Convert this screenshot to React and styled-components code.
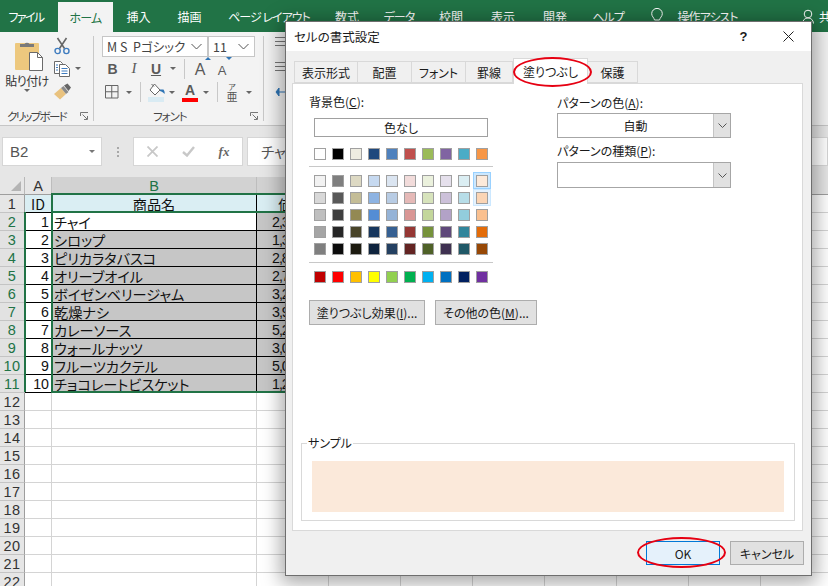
import { Fragment } from 'react'
import styled, { createGlobalStyle } from 'styled-components'

const GREEN = '#217346'
const UI_FONT = '"Noto Sans CJK JP", "Liberation Sans", sans-serif'

const GlobalStyle = createGlobalStyle`
  html, body {
    margin: 0;
    padding: 0;
    background: #fff;
  }
  * {
    box-sizing: border-box;
  }
`

const Page = styled.div`
  position: relative;
  width: 828px;
  height: 586px;
  overflow: hidden;
  display: flex;
  flex-direction: column;
  font-family: ${UI_FONT};
  font-feature-settings: 'palt';
  color: #222;
`

/* ---------- ribbon tabs ---------- */

const TabStrip = styled.div`
  display: flex;
  align-items: flex-end;
  flex: 0 0 32px;
  height: 32px;
  background: ${GREEN};
  white-space: nowrap;
`

const RibbonTab = styled.div`
  display: flex;
  align-items: center;
  justify-content: center;
  flex: 0 0 ${(p) => p.$w}px;
  height: ${(p) => (p.$active ? 30 : 32)}px;
  background: ${(p) => (p.$active ? '#f3f3f3' : 'transparent')};
  color: ${(p) => (p.$active ? GREEN : '#fff')};
  font-size: 12px;
  letter-spacing: ${(p) => p.$track || 0}px;
`

const TabSpacer = styled.div`
  flex: 0 0 ${(p) => p.$w}px;
`

const TabIcon = styled.div`
  display: flex;
  align-items: center;
  justify-content: center;
  flex: 0 0 ${(p) => p.$w}px;
  height: 32px;
`

/* ---------- ribbon ---------- */

const Ribbon = styled.div`
  display: flex;
  flex: 0 0 94px;
  height: 94px;
  background: #f3f3f3;
  border-bottom: 1px solid #c6c6c6;
  overflow: hidden;
`

const Group = styled.div`
  display: flex;
  flex-direction: column;
  flex: 0 0 ${(p) => p.$w}px;
  margin: 4px 0 4px;
  border-right: 1px solid #c8c8c8;
`

const GroupBody = styled.div`
  flex: 0 0 68px;
  display: flex;
`

const GroupFoot = styled.div`
  flex: 1;
  display: flex;
  align-items: center;
  justify-content: space-between;
  font-size: 11.5px;
  color: #444;
  padding: ${(p) => p.$pad};
`

const FootLabel = styled.span`
  letter-spacing: ${(p) => p.$track}px;
`

const PasteCol = styled.div`
  flex: 0 0 54px;
  display: flex;
  flex-direction: column;
  align-items: center;
  padding-top: 4px;
  font-size: 12px;
  color: #333;
`

const PasteLabel = styled.div`
  margin-top: 1px;
  line-height: 16px;
  letter-spacing: -0.6px;
`

const SmallCol = styled.div`
  display: flex;
  flex-direction: column;
  flex: 1;
  margin-top: -2px;
`

const SmallRow = styled.div`
  display: flex;
  align-items: center;
  height: 23px;
`

const FontCol = styled.div`
  display: flex;
  flex-direction: column;
  padding-left: 8px;
`

const ComboRow = styled.div`
  display: flex;
  flex: 0 0 21px;
`

const Combo = styled.div`
  display: flex;
  align-items: center;
  justify-content: space-between;
  width: ${(p) => p.$w}px;
  height: 21px;
  padding: 0 5px 0 4px;
  background: #fff;
  border: 1px solid #c6c6c6;
  font-size: 12.5px;
  color: #444;
  white-space: pre;
`

const ToolRow = styled.div`
  display: flex;
  align-items: center;
  height: ${(p) => p.$h}px;
`

const Slot = styled.div`
  display: flex;
  align-items: center;
  justify-content: center;
  flex: 0 0 ${(p) => p.$w}px;
  height: 22px;
`

const Divider = styled.div`
  flex: 0 0 1px;
  width: 1px;
  height: 20px;
  background: #c8c8c8;
`

const Caret = styled.span`
  display: block;
  width: 0;
  height: 0;
  border-left: 3.5px solid transparent;
  border-right: 3.5px solid transparent;
  border-top: 3.5px solid ${(p) => p.$color || '#666'};
`

const StyleLetter = styled.span`
  font-family: ${(p) => (p.$serif ? '"Liberation Serif", serif' : '"Liberation Sans", sans-serif')};
  font-size: ${(p) => p.$size || 14}px;
  font-weight: ${(p) => (p.$bold ? 700 : 400)};
  font-style: ${(p) => (p.$italic ? 'italic' : 'normal')};
  text-decoration: ${(p) => (p.$under ? 'underline' : 'none')};
  color: #5a5a5a;
  line-height: 1;
`

const GrowLetter = styled.span`
  position: relative;
  display: block;
  line-height: 1;
`

const GrowMark = styled.span`
  position: absolute;
  top: -3px;
  right: -6px;
  width: 0;
  height: 0;
  border-left: 3px solid transparent;
  border-right: 3px solid transparent;
  ${(p) => (p.$down ? 'border-top' : 'border-bottom')}: 3px solid #2f75b5;
`

const ColorLetter = styled.div`
  display: flex;
  flex-direction: column;
  align-items: center;
  width: 16px;
`

const ColorBar = styled.div`
  width: 16px;
  height: 4px;
  margin-top: 1px;
  background: #f00;
`

const Phonetic = styled.div`
  display: flex;
  flex-direction: column;
  align-items: center;
  color: #555;
`

const PhoneticTop = styled.span`
  font-size: 8px;
  line-height: 8px;
`

const PhoneticBase = styled.span`
  font-size: 11px;
  line-height: 11px;
`

const EdgeCol = styled.div`
  display: flex;
  flex-direction: column;
  gap: 15px;
  padding: 5px 0 0 11px;
`

/* ---------- formula bar ---------- */

const FormulaBar = styled.div`
  display: flex;
  flex: 0 0 51px;
  height: 51px;
  padding: 11px 0 11px 2px;
  background: #e6e6e6;
`

const NameBox = styled.div`
  display: flex;
  align-items: center;
  justify-content: space-between;
  flex: 0 0 100px;
  padding: 0 6px 0 7px;
  background: #fff;
  border: 1px solid #d6d6d6;
  font-family: 'Liberation Sans', sans-serif;
  font-size: 15px;
  color: #555;
`

const Grip = styled.div`
  display: flex;
  flex-direction: column;
  align-items: center;
  justify-content: center;
  gap: 2px;
  flex: 0 0 31px;
`

const GripDot = styled.span`
  width: 2px;
  height: 2px;
  background: #a8a8a8;
`

const FxBox = styled.div`
  display: flex;
  align-items: center;
  flex: 0 0 110px;
  background: #fff;
  border: 1px solid #d6d6d6;
`

const FxSlot = styled.div`
  display: flex;
  align-items: center;
  justify-content: center;
  flex: 1;
  font-family: 'Liberation Serif', serif;
  font-style: italic;
  font-weight: 700;
  font-size: 13px;
  color: #666;
`

const FormulaInput = styled.div`
  display: flex;
  align-items: center;
  flex: 1;
  margin-left: 4px;
  padding-left: 13px;
  background: #fff;
  border: 1px solid #d6d6d6;
  font-size: 14.5px;
  color: #555;
`

/* ---------- sheet ---------- */

const Sheet = styled.div`
  position: relative;
  flex: 1;
  display: grid;
  grid-template-columns: 25px 27px 205px repeat(8, 72px);
  grid-auto-rows: 18px;
  align-content: start;
  background: #fff;
  font-size: 14.2px;
  line-height: 16px;
  color: #111;
  overflow: hidden;
`

const Corner = styled.div`
  display: flex;
  align-items: flex-end;
  justify-content: flex-end;
  padding: 0 3px 3px 0;
  background: #e6e6e6;
  border-right: 1px solid #b8b8b8;
  border-bottom: 1px solid #9e9e9e;
`

const CornerMark = styled.span`
  width: 0;
  height: 0;
  border-left: 10px solid transparent;
  border-bottom: 10px solid #b4b4b4;
`

const ColHead = styled.div`
  display: flex;
  align-items: center;
  justify-content: center;
  background: ${(p) => (p.$sel ? '#d2d2d2' : '#e6e6e6')};
  color: ${(p) => (p.$green ? GREEN : '#333')};
  border-right: 1px solid #bdbdbd;
  border-bottom: 1px solid #9e9e9e;
  font-family: 'Liberation Sans', sans-serif;
  font-size: 14.5px;
`

const RowHead = styled.div`
  display: flex;
  align-items: center;
  justify-content: center;
  background: ${(p) => (p.$sel ? '#e2e2e2' : '#e6e6e6')};
  color: ${(p) => (p.$sel ? GREEN : '#333')};
  border-right: 1px solid #9e9e9e;
  border-bottom: 1px solid #c4c4c4;
  font-family: 'Liberation Sans', sans-serif;
  font-size: 14.5px;
  letter-spacing: 0.5px;
`

const Cell = styled.div`
  display: flex;
  align-items: center;
  justify-content: ${(p) => p.$justify || 'flex-start'};
  padding: ${(p) => p.$pad || '0 2px'};
  background: ${(p) => p.$fill || '#fff'};
  border-right: 1px solid ${(p) => (p.$table ? '#000' : '#d4d4d4')};
  border-bottom: 1px solid ${(p) => (p.$table ? '#000' : '#d4d4d4')};
  white-space: nowrap;
  overflow: hidden;
`

const NumText = styled.span`
  font-family: 'Liberation Sans', sans-serif;
  letter-spacing: ${(p) => p.$track || 0}px;
`

const SelectionLine = styled.div`
  position: absolute;
  left: ${(p) => p.$x}px;
  top: ${(p) => p.$y}px;
  width: ${(p) => p.$w}px;
  height: ${(p) => p.$h}px;
  background: ${GREEN};
`

/* ---------- dialog ---------- */

const Dialog = styled.div`
  position: absolute;
  z-index: 1;
  left: 285px;
  top: 21px;
  width: 527px;
  height: 555px;
  display: flex;
  flex-direction: column;
  background: #f0f0f0;
  border: 1px solid #6e6e6e;
  box-shadow: 0 3px 18px 4px rgba(0, 0, 0, 0.35);
  font-size: 12px;
  color: #1a1a1a;
`

const TitleBar = styled.div`
  display: flex;
  align-items: center;
  flex: 0 0 29px;
  padding-left: 8px;
  background: #fff;
`

const TitleText = styled.div`
  flex: 1;
  font-size: 12.5px;
`

const TitleButton = styled.div`
  display: flex;
  align-items: center;
  justify-content: center;
  flex: 0 0 45px;
  font-family: 'Liberation Sans', sans-serif;
  font-size: 13px;
  font-weight: 700;
`

const DialogTabs = styled.div`
  display: flex;
  align-items: flex-end;
  flex: 0 0 32px;
  padding-left: 8px;
`

const DialogTab = styled.div`
  position: relative;
  z-index: ${(p) => (p.$active ? 1 : 0)};
  display: flex;
  align-items: center;
  justify-content: center;
  flex: 0 0 ${(p) => p.$w}px;
  height: ${(p) => (p.$active ? 26 : 22)}px;
  margin-bottom: ${(p) => (p.$active ? -1 : 0)}px;
  background: ${(p) => (p.$active ? '#fff' : '#f0f0f0')};
  border: 1px solid #d9d9d9;
  border-bottom: ${(p) => (p.$active ? 'none' : '1px solid #d9d9d9')};
  border-left-width: ${(p) => (p.$first || p.$active ? 1 : 0)}px;
`

const Panel = styled.div`
  display: flex;
  flex-direction: column;
  flex: 0 0 448px;
  margin: 0 8px 0 6px;
  background: #fff;
  border: 1px solid #d9d9d9;
`

const PanelColumns = styled.div`
  display: flex;
  padding: 10px 0 0 16px;
`

const LeftCol = styled.div`
  flex: 0 0 184px;
  min-width: 0;
`

const RightCol = styled.div`
  flex: 0 0 174px;
  margin-left: 64px;
  padding-top: 1px;
`

const FieldLabel = styled.div`
  height: 16px;
  line-height: 16px;
  margin-top: ${(p) => p.$mt || 0}px;
`

const NoColor = styled.div`
  display: flex;
  align-items: center;
  justify-content: center;
  width: 174px;
  height: 19px;
  margin: 8px 0 0 5px;
  background: #fff;
  border: 1px solid #a0a0a0;
`

const Palette = styled.div`
  display: grid;
  grid-template-columns: repeat(10, 18px);
  grid-auto-rows: 17px;
  margin: ${(p) => p.$mt}px 0 0 2px;
`

const SwatchCell = styled.div`
  display: flex;
  align-items: center;
  justify-content: center;
  background: ${(p) => (p.$state === 'selected' ? '#cce8ff' : p.$state === 'hover' ? '#e5f3ff' : 'transparent')};
  border: 1px solid
    ${(p) => (p.$state === 'selected' ? '#99d1ff' : p.$state === 'hover' ? '#cce8ff' : 'transparent')};
`

const Swatch = styled.span`
  display: block;
  flex: 0 0 12px;
  width: 12px;
  height: 12px;
  background: ${(p) => p.$color};
  border: 1px solid #a0a0a0;
`

const Rule = styled.div`
  height: 1px;
  margin-top: ${(p) => p.$mt}px;
  background: #c8c8c8;
`

const ButtonRow = styled.div`
  display: flex;
  gap: 10px;
  margin-top: 15px;
`

const DialogButton = styled.div`
  display: flex;
  align-items: center;
  justify-content: center;
  flex: 0 0 ${(p) => p.$w}px;
  height: ${(p) => p.$h || 25}px;
  background: ${(p) => (p.$primary ? '#e5f1fb' : '#e1e1e1')};
  border: 1px solid ${(p) => (p.$primary ? '#0078d7' : '#adadad')};
  white-space: nowrap;
`

const SelectBox = styled.div`
  display: flex;
  align-items: stretch;
  height: ${(p) => p.$h}px;
  margin-top: ${(p) => p.$mt}px;
  background: #fff;
  border: 1px solid #a6a6a6;
`

const SelectValue = styled.div`
  display: flex;
  align-items: center;
  justify-content: center;
  flex: 1;
`

const SelectArrow = styled.div`
  display: flex;
  align-items: center;
  justify-content: center;
  flex: 0 0 17px;
  background: #e1e1e1;
  border-left: 1px solid #c4c4c4;
`

const SampleBox = styled.div`
  position: relative;
  margin: auto 7px 9px 8px;
  padding: 17px 10px 8px;
  border: 1px solid #d9d9d9;
`

const SampleLegend = styled.div`
  position: absolute;
  left: 5px;
  top: -8px;
  padding: 0 1px;
  line-height: 14px;
  background: #fff;
`

const SampleFill = styled.div`
  height: 51px;
  background: #fbe9da;
`

const DialogFooter = styled.div`
  display: flex;
  justify-content: flex-end;
  gap: 10px;
  padding: 10px 7px 0 0;
`

const RedOval = styled.div`
  position: absolute;
  z-index: 2;
  left: ${(p) => p.$x}px;
  top: ${(p) => p.$y}px;
  width: ${(p) => p.$w}px;
  height: ${(p) => p.$h}px;
  border: 2px solid #e60012;
  border-radius: 50%;
  pointer-events: none;
`

/* ---------- icons ---------- */

const PasteIcon = () => (
  <svg width="34" height="32" viewBox="-4 0 34 32">
    <rect x="1" y="3" width="24" height="27" rx="1" fill="#edc87e" />
    <path d="M6 7V4h4.500a3 3 0 0 1 5 0H20v3z" fill="#7a7a7a" />
    <path d="M15.500 12.500h8l5 5v13h-13z" fill="#fff" stroke="#6a6a6a" />
    <path d="M23.500 12.500v5h5" fill="none" stroke="#6a6a6a" />
  </svg>
)

const ScissorsIcon = () => (
  <svg width="16" height="18" viewBox="0 0 16 18">
    <path d="M5.500 11.500 12.500 1M10.500 11.500 3.500 1" stroke="#666" strokeWidth="1.6" fill="none" />
    <circle cx="3.600" cy="14" r="2.600" fill="none" stroke="#3f7cbf" strokeWidth="1.4" />
    <circle cx="12.400" cy="14" r="2.600" fill="none" stroke="#3f7cbf" strokeWidth="1.4" />
  </svg>
)

const CopyIcon = () => (
  <svg width="16" height="16" viewBox="0 0 16 16">
    <path d="M.5.500h6l2 2v10h-8z" fill="#fff" stroke="#6a6a6a" />
    <path d="M5.500 3.500h6l4 4v8h-10z" fill="#fff" stroke="#6a6a6a" />
    <path d="M2 4h2M2 6.500h2M2 9h2M7.500 7.500h6M7.500 10h6M7.500 12.500h6" stroke="#3f7cbf" />
  </svg>
)

const BrushIcon = () => (
  <svg width="18" height="17" viewBox="0 0 18 17">
    <path d="M0 11 7 5l5 6-6 5.500z" fill="#e9c27e" />
    <path d="M7 5l2.500-2 5 6L12 11z" fill="#8a8a8a" />
    <path d="M10 2.500 13.500.5l3.500 4-2.500 3.500z" fill="#666" />
  </svg>
)

const GridIcon = () => (
  <svg width="14" height="14" viewBox="0 0 14 14">
    <path d="M.5.500h12.500v12.500H.5zM6.750.5v12.500M.5 6.750h12.500" fill="none" stroke="#666" />
  </svg>
)

const BucketIcon = () => (
  <svg width="18" height="19" viewBox="0 0 18 19">
    <rect x="0" y="14" width="16" height="5" fill="#d9ebf3" />
    <path d="M6.500 1 12 7l-5 5-5-5z" fill="#fff" stroke="#666" />
    <path d="M3.500 1 6 3.500" stroke="#666" />
    <path d="M12 6.500h3.500c1 1.500 1.500 3 1 4.500-1-1-1.500-2-4.500-3z" fill="#2f75b5" />
  </svg>
)

const Launcher = () => (
  <svg width="9" height="9" viewBox="0 0 9 9">
    <path d="M.5 4V.5H8" fill="none" stroke="#777" />
    <path d="M2.500 2.500 7 7M4 7.500h3.500V4" fill="none" stroke="#777" />
  </svg>
)

const AlignIcon = () => (
  <svg width="14" height="10" viewBox="0 0 14 10">
    <path d="M0 .5h14M0 4.500h14M0 8.500h14" stroke="#777" />
  </svg>
)

const IndentIcon = () => (
  <svg width="14" height="10" viewBox="0 0 14 10">
    <path d="M4 1 1 5l3 4zM3 5h7" fill="#2f75b5" stroke="#2f75b5" />
    <path d="M11 .5h3M11 4.500h3M11 8.500h3" stroke="#777" />
  </svg>
)

const ComboChevron = () => (
  <svg width="11" height="7" viewBox="0 0 11 7">
    <path d="M.5 1 5.500 6l5-5" fill="none" stroke="#555" />
  </svg>
)

const SelectChevron = () => (
  <svg width="9" height="5" viewBox="0 0 9 5">
    <path d="M.5.500 4.500 4.500l4-4" fill="none" stroke="#555" />
  </svg>
)

const CrossIcon = () => (
  <svg width="11" height="11" viewBox="0 0 11 11">
    <path d="M.5.500l10 10M10.500.500l-10 10" stroke="#c8c8c8" strokeWidth="1.8" />
  </svg>
)

const CheckIcon = () => (
  <svg width="13" height="11" viewBox="0 0 13 11">
    <path d="M1 6l4 3.500L12 1" fill="none" stroke="#c8c8c8" strokeWidth="2.400" />
  </svg>
)

const CloseIcon = () => (
  <svg width="11" height="11" viewBox="0 0 11 11">
    <path d="M.5.500l10 10M10.500.500l-10 10" stroke="#222" />
  </svg>
)

const BulbIcon = () => (
  <svg width="12" height="16" viewBox="0 0 12 16">
    <path d="M3.500 12C3 9.500.7 8.500.7 5.700a5.300 5.300 0 0 1 10.600 0c0 2.800-2.300 3.800-2.800 6.300zM4 14.500h4" fill="none" stroke="#fff" />
  </svg>
)

const PersonIcon = () => (
  <svg width="12" height="15" viewBox="0 0 12 15">
    <circle cx="6" cy="5" r="3.800" fill="none" stroke="#fff" />
    <path d="M.5 14.500c.3-3.500 2.300-5.500 5.500-5.500s5.200 2 5.500 5.500" fill="none" stroke="#fff" />
  </svg>
)

/* ---------- data ---------- */

const PRODUCTS = [
  ['チャイ', '2,340'],
  ['シロップ', '1,300'],
  ['ピリカラタバスコ', '2,800'],
  ['オリーブオイル', '2,700'],
  ['ボイゼンベリージャム', '3,200'],
  ['乾燥ナシ', '3,900'],
  ['カレーソース', '5,200'],
  ['ウォールナッツ', '3,000'],
  ['フルーツカクテル', '5,000'],
  ['チョコレートビスケット', '1,200'],
]

const THEME_TOP = ['#ffffff', '#000000', '#eeece1', '#1f497d', '#4f81bd', '#c0504d', '#9bbb59', '#8064a2', '#4bacc6', '#f79646']
const THEME_SHADES = [
  '#f2f2f2', '#7f7f7f', '#ddd9c3', '#c6d9f0', '#dbe5f1', '#f2dcdb', '#ebf1dd', '#e5e0ec', '#dbeef3', '#fdeada',
  '#d8d8d8', '#595959', '#c4bd97', '#8db3e2', '#b8cce4', '#e5b9b7', '#d7e3bc', '#ccc1d9', '#b7dde8', '#fbd5b5',
  '#bfbfbf', '#3f3f3f', '#938953', '#548dd4', '#95b3d7', '#d99694', '#c3d69b', '#b2a2c7', '#92cddc', '#fac08f',
  '#a5a5a5', '#262626', '#494429', '#17365d', '#366092', '#953734', '#76923c', '#5f497a', '#31859b', '#e36c09',
  '#7f7f7f', '#0c0c0c', '#1d1b10', '#0f243e', '#244061', '#632423', '#4f6128', '#3f3151', '#205867', '#974806',
]
const STANDARD = ['#c00000', '#ff0000', '#ffc000', '#ffff00', '#92d050', '#00b050', '#00b0f0', '#0070c0', '#002060', '#7030a0']

const COLUMNS = ['D', 'E', 'F', 'G', 'H', 'I', 'J']
const ALL_COLUMNS = ['A', 'B', 'C', ...COLUMNS]
const GRAY = '#c6c6c6'
const HEADER_BLUE = '#daeef3'

function swatchState(i) {
  if (i === 9) return 'selected'
  if (i === 19) return 'hover'
  return undefined
}

function PaletteRow({ colors, mt, marks }) {
  return (
    <Palette $mt={mt}>
      {colors.map((c, i) => (
        <SwatchCell key={i} $state={marks ? swatchState(i) : undefined}>
          <Swatch $color={c} />
        </SwatchCell>
      ))}
    </Palette>
  )
}

function Spreadsheet() {
  const blankRows = Array.from({ length: 11 }, (_, i) => i + 12)

  return (
    <Sheet>
      <Corner>
        <CornerMark />
      </Corner>
      <ColHead>A</ColHead>
      <ColHead $sel $green>B</ColHead>
      <ColHead $sel>C</ColHead>
      {COLUMNS.map((c) => (
        <ColHead key={c}>{c}</ColHead>
      ))}

      <RowHead>1</RowHead>
      <Cell $table $fill={HEADER_BLUE} $justify="center">ID</Cell>
      <Cell $table $fill={HEADER_BLUE} $justify="center">商品名</Cell>
      <Cell $table $fill={HEADER_BLUE} $justify="center">価格</Cell>
      {COLUMNS.map((c) => (
        <Cell key={c} />
      ))}

      {PRODUCTS.map(([name, price], i) => (
        <Fragment key={name}>
          <RowHead $sel>{i + 2}</RowHead>
          <Cell $table $justify="flex-end"><NumText>{i + 1}</NumText></Cell>
          <Cell $table $fill={i === 0 ? '#fff' : GRAY}>{name}</Cell>
          <Cell $table $fill={GRAY} $pad="0 0 0 15px"><NumText $track={-1}>{price}</NumText></Cell>
          {COLUMNS.map((c) => (
            <Cell key={c} />
          ))}
        </Fragment>
      ))}

      {blankRows.map((r) => (
        <Fragment key={r}>
          <RowHead>{r}</RowHead>
          {ALL_COLUMNS.map((c) => (
            <Cell key={c} />
          ))}
        </Fragment>
      ))}

      <SelectionLine $x={51} $y={16} $w={300} $h={2} />
      <SelectionLine $x={51} $y={34} $w={300} $h={2} />
      <SelectionLine $x={51} $y={214} $w={300} $h={2} />
      <SelectionLine $x={51} $y={16} $w={2} $h={200} />
      <SelectionLine $x={24} $y={35} $w={2} $h={180} />
    </Sheet>
  )
}

function FormatDialog() {
  return (
    <Dialog>
      <TitleBar>
        <TitleText>セルの書式設定</TitleText>
        <TitleButton>?</TitleButton>
        <TitleButton><CloseIcon /></TitleButton>
      </TitleBar>

      <DialogTabs>
        <DialogTab $w={64} $first>表示形式</DialogTab>
        <DialogTab $w={54}>配置</DialogTab>
        <DialogTab $w={54}>フォント</DialogTab>
        <DialogTab $w={47}>罫線</DialogTab>
        <DialogTab $w={75} $active>塗りつぶし</DialogTab>
        <DialogTab $w={50}>保護</DialogTab>
      </DialogTabs>

      <Panel>
        <PanelColumns>
          <LeftCol>
            <FieldLabel>背景色(<u>C</u>):</FieldLabel>
            <NoColor>色なし</NoColor>
            <PaletteRow colors={THEME_TOP} mt={8} />
            <Rule $mt={4} />
            <PaletteRow colors={THEME_SHADES} mt={5} marks />
            <Rule $mt={5} />
            <PaletteRow colors={STANDARD} mt={5} />
            <ButtonRow>
              <DialogButton $w={116}>塗りつぶし効果(<u>I</u>)...</DialogButton>
              <DialogButton $w={102}>その他の色(<u>M</u>)...</DialogButton>
            </ButtonRow>
          </LeftCol>

          <RightCol>
            <FieldLabel>パターンの色(<u>A</u>):</FieldLabel>
            <SelectBox $h={25} $mt={2}>
              <SelectValue>自動</SelectValue>
              <SelectArrow><SelectChevron /></SelectArrow>
            </SelectBox>
            <FieldLabel $mt={5}>パターンの種類(<u>P</u>):</FieldLabel>
            <SelectBox $h={26} $mt={3}>
              <SelectValue />
              <SelectArrow><SelectChevron /></SelectArrow>
            </SelectBox>
          </RightCol>
        </PanelColumns>

        <SampleBox>
          <SampleLegend>サンプル</SampleLegend>
          <SampleFill />
        </SampleBox>
      </Panel>

      <DialogFooter>
        <DialogButton $w={74} $h={24} $primary>OK</DialogButton>
        <DialogButton $w={74} $h={24}>キャンセル</DialogButton>
      </DialogFooter>
    </Dialog>
  )
}

export default function App() {
  return (
    <Page>
      <GlobalStyle />

      <TabStrip>
        <RibbonTab $w={52} $track={-1.6}>ファイル</RibbonTab>
        <TabSpacer $w={6} />
        <RibbonTab $w={55} $track={-0.8} $active>ホーム</RibbonTab>
        <RibbonTab $w={51}>挿入</RibbonTab>
        <RibbonTab $w={51}>描画</RibbonTab>
        <RibbonTab $w={108} $track={-1}>ページ レイアウト</RibbonTab>
        <RibbonTab $w={48}>数式</RibbonTab>
        <RibbonTab $w={56} $track={-1}>データ</RibbonTab>
        <RibbonTab $w={48}>校閲</RibbonTab>
        <RibbonTab $w={56}>表示</RibbonTab>
        <RibbonTab $w={48}>開発</RibbonTab>
        <RibbonTab $w={58} $track={-1}>ヘルプ</RibbonTab>
        <TabIcon $w={40}><BulbIcon /></TabIcon>
        <RibbonTab $w={61} $track={-1}>操作アシスト</RibbonTab>
        <TabSpacer $w={63} />
        <TabIcon $w={14}><PersonIcon /></TabIcon>
        <TabSpacer $w={4} />
        <RibbonTab $w={24}>共有</RibbonTab>
      </TabStrip>

      <Ribbon>
        <Group $w={94}>
          <GroupBody>
            <PasteCol>
              <PasteIcon />
              <PasteLabel>貼り付け</PasteLabel>
              <Caret />
            </PasteCol>
            <SmallCol>
              <SmallRow><Slot $w={16}><ScissorsIcon /></Slot></SmallRow>
              <SmallRow>
                <Slot $w={16}><CopyIcon /></Slot>
                <Slot $w={16}><Caret /></Slot>
              </SmallRow>
              <SmallRow><Slot $w={18}><BrushIcon /></Slot></SmallRow>
            </SmallCol>
          </GroupBody>
          <GroupFoot $pad="4px 4px 0 7px">
            <FootLabel $track={-1.7}>クリップボード</FootLabel>
            <Launcher />
          </GroupFoot>
        </Group>

        <Group $w={170}>
          <GroupBody>
            <FontCol>
              <ComboRow>
                <Combo $w={106}>{'M S  Pゴシック'}<ComboChevron /></Combo>
                <Combo $w={47}>11<ComboChevron /></Combo>
              </ComboRow>
              <ToolRow $h={23}>
                <Slot $w={21}><StyleLetter $bold>B</StyleLetter></Slot>
                <Slot $w={22}><StyleLetter $serif $italic $size={15}>I</StyleLetter></Slot>
                <Slot $w={22}><StyleLetter $bold $under>U</StyleLetter></Slot>
                <Slot $w={12}><Caret /></Slot>
                <Slot $w={5} />
                <Divider />
                <Slot $w={30}>
                  <GrowLetter>
                    <StyleLetter $size={16}>A</StyleLetter>
                    <GrowMark />
                  </GrowLetter>
                </Slot>
                <Slot $w={14}>
                  <GrowLetter>
                    <StyleLetter $size={13}>A</StyleLetter>
                    <GrowMark $down />
                  </GrowLetter>
                </Slot>
              </ToolRow>
              <ToolRow $h={24}>
                <Slot $w={20}><GridIcon /></Slot>
                <Slot $w={14}><Caret /></Slot>
                <Slot $w={4} />
                <Divider />
                <Slot $w={6} />
                <Slot $w={20}><BucketIcon /></Slot>
                <Slot $w={10}><Caret /></Slot>
                <Slot $w={26}>
                  <ColorLetter>
                    <StyleLetter $bold $size={14}>A</StyleLetter>
                    <ColorBar />
                  </ColorLetter>
                </Slot>
                <Slot $w={6}><Caret /></Slot>
                <Slot $w={8} />
                <Divider />
                <Slot $w={6} />
                <Slot $w={16}>
                  <Phonetic>
                    <PhoneticTop>ア</PhoneticTop>
                    <PhoneticBase>亜</PhoneticBase>
                  </Phonetic>
                </Slot>
                <Slot $w={18}><Caret /></Slot>
              </ToolRow>
            </FontCol>
          </GroupBody>
          <GroupFoot $pad="4px 4px 0 59px">
            <FootLabel $track={-1}>フォント</FootLabel>
            <Launcher />
          </GroupFoot>
        </Group>

        <EdgeCol>
          <AlignIcon />
          <AlignIcon />
          <IndentIcon />
        </EdgeCol>
      </Ribbon>

      <FormulaBar>
        <NameBox>B2<Caret $color="#777" /></NameBox>
        <Grip>
          <GripDot />
          <GripDot />
          <GripDot />
        </Grip>
        <FxBox>
          <FxSlot><CrossIcon /></FxSlot>
          <FxSlot><CheckIcon /></FxSlot>
          <FxSlot>fx</FxSlot>
        </FxBox>
        <FormulaInput>チャイ</FormulaInput>
      </FormulaBar>

      <Spreadsheet />
      <FormatDialog />

      <RedOval $x={513} $y={57} $w={79} $h={30} />
      <RedOval $x={637} $y={537} $w={89} $h={31} />
    </Page>
  )
}
